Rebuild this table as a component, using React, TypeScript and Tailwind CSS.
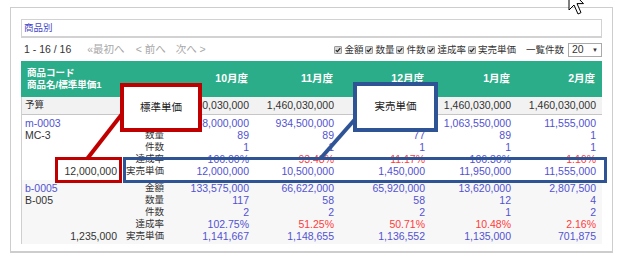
import React from "react";

type Cell = string;

type Item = {
  code: string;
  name: string;
  std: string;
  amount: Cell[];
  qty: Cell[];
  count: Cell[];
  rate: Cell[];
  unit: Cell[];
};

const months = ["10月度", "11月度", "12月度", "1月度", "2月度"];
const budget = ["1,460,030,000", "1,460,030,000", "1,460,030,000", "1,460,030,000", "1,460,030,000"];

const items: Item[] = [
  {
    code: "m-0003",
    name: "MC-3",
    std: "12,000,000",
    amount: ["1,068,000,000", "934,500,000", "163,100,000", "1,063,550,000", "11,555,000"],
    qty: ["89", "89", "77", "89", "1"],
    count: ["1", "1", "1", "1", "1"],
    rate: ["106.00%", "93.48%", "11.17%", "106.36%", "1.16%"],
    unit: ["12,000,000", "10,500,000", "1,450,000", "11,950,000", "11,555,000"],
  },
  {
    code: "b-0005",
    name: "B-005",
    std: "1,235,000",
    amount: ["133,575,000", "66,622,000", "65,920,000", "13,620,000", "2,807,500"],
    qty: ["117", "58", "58", "12", "4"],
    count: ["2", "2", "2", "1", "2"],
    rate: ["102.75%", "51.25%", "50.71%", "10.48%", "2.16%"],
    unit: ["1,141,667", "1,148,655", "1,136,552", "1,135,000", "701,875"],
  },
];

const grid = "grid grid-cols-[99px_46px_85px_85px_91px_86px_85px]";

function Check({ label }: { label: string }) {
  return (
    <span className="flex items-center gap-[2px]">
      <span className="flex h-[8px] w-[8px] items-center justify-center rounded-[1px] border border-[#9a9a9a] bg-[#d8d8d8]">
        <svg width="6" height="6" viewBox="0 0 6 6">
          <path d="M0.8 3.1 L2.4 4.7 L5.3 1.2" stroke="#222" strokeWidth="1.2" fill="none" />
        </svg>
      </span>
      <span className="text-[9.5px] text-[#333]">{label}</span>
    </span>
  );
}

function DataRow({ label, left, values, kind }: { label: string; left?: React.ReactNode; values: Cell[]; kind?: "rate" }) {
  return (
    <div className={`${grid} h-[12px] items-center leading-[12px]`}>
      <div className="pl-[3px] pr-[4px]">{left}</div>
      <div className="pr-[3px] text-right text-[9.5px] text-[#333]">{label}</div>
      {values.map((v, i) => {
        const low = kind === "rate" && parseFloat(v) < 100;
        return (
          <div key={i} className={`pr-[3px] text-right ${low ? "text-[#ff3b3b]" : "text-[#5252d2]"}`}>
            {v}
          </div>
        );
      })}
    </div>
  );
}

function Block({ item, shade }: { item: Item; shade: boolean }) {
  return (
    <div className={`pt-[2px] pb-[3px] ${shade ? "bg-[#f7f7f7]" : "bg-white"}`}>
      <DataRow label="金額" left={<span className="text-[#5252d2]">{item.code}</span>} values={item.amount} />
      <DataRow label="数量" left={<span className="text-[#333]">{item.name}</span>} values={item.qty} />
      <DataRow label="件数" values={item.count} />
      <DataRow label="達成率" values={item.rate} kind="rate" />
      <DataRow label="実売単価" left={<div className="text-right text-[#333]">{item.std}</div>} values={item.unit} />
    </div>
  );
}

export default function App() {
  return (
    <div className="relative h-[260px] w-[640px] overflow-hidden bg-white font-['Liberation_Sans','Noto_Sans_CJK_JP',sans-serif] text-[10.5px]">
      <div className="ml-[10px] mt-[7px] flex h-[246px] w-[603px] flex-col border border-b-2 border-[#cdcdcd] px-[10px] pt-[11px]">
        {/* search label */}
        <div className="flex h-[19px] items-center border border-b-2 border-[#d2d2d2] px-[2px] text-[9.5px] text-[#4646c8]">
          商品別
        </div>

        {/* pager + options */}
        <div className="mt-[4px] flex h-[16px] items-center justify-between">
          <div className="flex items-center pl-[3px]">
            <span className="text-[#333]">1 - 16 / 16</span>
            <span className="ml-[16px] text-[#a8a8a8]">«最初へ</span>
            <span className="ml-[11px] text-[#a8a8a8]">&lt; 前へ</span>
            <span className="ml-[10px] text-[#a8a8a8]">次へ &gt;</span>
          </div>
          <div className="flex items-center">
            <div className="flex items-center gap-[2px]">
              <Check label="金額" />
              <Check label="数量" />
              <Check label="件数" />
              <Check label="達成率" />
              <Check label="実売単価" />
            </div>
            <span className="ml-[10px] text-[9.5px] text-[#333]">一覧件数</span>
            <div className="ml-[4px] flex h-[14px] w-[34px] items-center justify-between border border-[#a9a9a9] bg-white pl-[3px] pr-[3px] text-[#333]">
              <span>20</span>
              <span className="text-[6px]">▼</span>
            </div>
          </div>
        </div>

        {/* table */}
        <div className="mt-[3px] h-[183px] overflow-hidden">
          <div className={`${grid} h-[36px] bg-[#2bad89] font-bold text-white`}>
            <div className="col-span-2 flex flex-col justify-center pl-[6px] text-[9.5px] leading-[12px]">
              <span>商品コード</span>
              <span>商品名/標準単価1</span>
            </div>
            {months.map((m) => (
              <div key={m} className="self-center pr-[3px] text-right">
                {m}
              </div>
            ))}
          </div>
          <div className="border-l border-[#cfcfcf]">
            <div className={`${grid} h-[18px] items-center border-b border-[#c6c6c6] bg-[#f2f2f2] text-[#333]`}>
              <div className="pl-[3px] text-[9.5px]">予算</div>
              <div />
              {budget.map((b, i) => (
                <div key={i} className="pr-[3px] text-right">
                  {b}
                </div>
              ))}
            </div>
            {items.map((it, i) => (
              <Block key={it.code} item={it} shade={i % 2 === 1} />
            ))}
          </div>
        </div>
      </div>

      {/* annotation lines */}
      <svg className="pointer-events-none absolute left-0 top-0" width="640" height="260">
        <line x1="87" y1="159" x2="122" y2="114" stroke="#c00000" strokeWidth="4" />
        <line x1="320" y1="159" x2="357" y2="117" stroke="#2f5496" strokeWidth="4" />
        {/* mouse pointer */}
        <path
          d="M569 -11 L569 10 L574 5 L578 14 L581 12.6 L577 3.6 L583.5 3.6 Z"
          fill="#fff"
          stroke="#000"
          strokeWidth="1"
        />
      </svg>

      {/* annotation boxes */}
      <div className="absolute left-[55px] top-[157px] h-[26px] w-[67px] border-[3px] border-[#c00000]" />
      <div className="absolute left-[123px] top-[157px] h-[26px] w-[484px] border-[3px] border-[#2f5496]" />
      <div className="absolute left-[120px] top-[83px] flex h-[49px] w-[82px] items-center justify-center border-4 border-[#c00000] bg-white text-[10.5px] text-[#222]">
        標準単価
      </div>
      <div className="absolute left-[353px] top-[82px] flex h-[50px] w-[85px] items-center justify-center border-4 border-[#2f5496] bg-white text-[10.5px] text-[#222]">
        実売単価
      </div>
    </div>
  );
}
